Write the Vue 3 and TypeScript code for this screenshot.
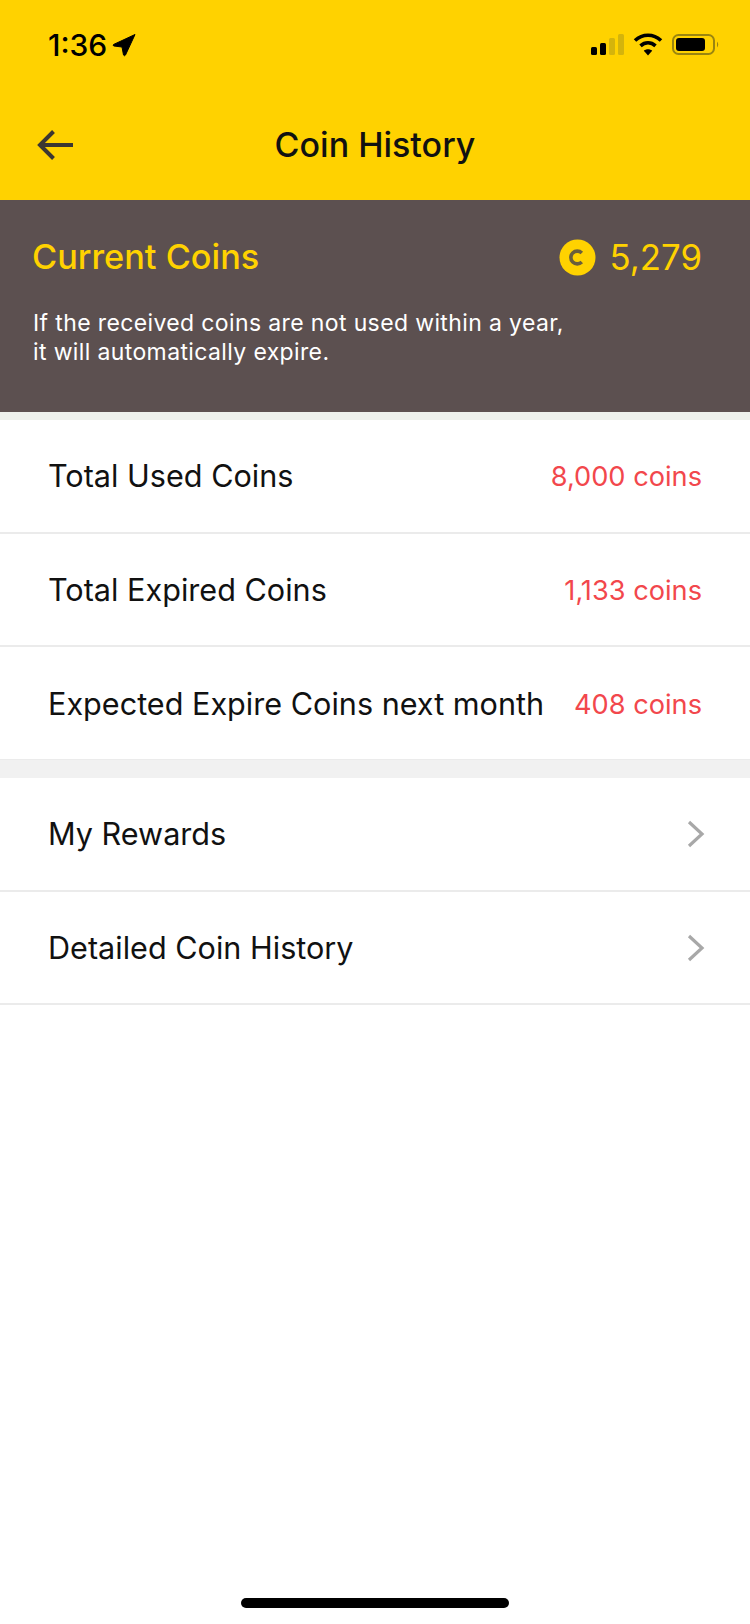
<script setup lang="ts">
interface StatRow {
  label: string
  value: string
}
const stats: StatRow[] = [
  { label: 'Total Used Coins', value: '8,000 coins' },
  { label: 'Total Expired Coins', value: '1,133 coins' },
  { label: 'Expected Expire Coins next month', value: '408 coins' }
]
const links: string[] = ['My Rewards', 'Detailed Coin History']
</script>

<template>
  <div class="page">
    <header class="top">
      <div class="status">
        <div class="status-left">
          <span class="time">1:36</span>
          <svg class="loc" width="24" height="24" viewBox="0 0 24 24">
            <path d="M23 1.5 L1.5 11.5 Q0.5 12.5 2 13 L10 14 L11.5 22 Q12.5 23.5 13.5 22 Z" fill="#000" stroke="#000" stroke-width="1" stroke-linejoin="round" />
          </svg>
        </div>
        <div class="status-right">
          <svg class="signal" width="36" height="24" viewBox="0 0 36 24">
            <rect x="1" y="14" width="6" height="8" rx="1.5" fill="#000" />
            <rect x="10" y="10" width="6" height="12" rx="1.5" fill="#000" />
            <rect x="19" y="5" width="6" height="17" rx="1.5" fill="#d4b40c" />
            <rect x="28" y="1" width="6" height="21" rx="1.5" fill="#d4b40c" />
          </svg>
          <svg width="30" height="24" viewBox="0 0 30 24">
            <path d="M2 7.5 C9.5 0.5 20.5 0.5 28 7.5" fill="none" stroke="#000" stroke-width="3.6" />
            <path d="M7.5 12.8 C12 8.8 18 8.8 22.5 12.8" fill="none" stroke="#000" stroke-width="3.6" />
            <path d="M15 22.5 L10.8 17.8 C13 15.8 17 15.8 19.2 17.8 Z" fill="#000" />
          </svg>
          <svg width="48" height="24" viewBox="0 0 48 24">
            <rect x="1" y="2" width="41" height="19" rx="5.5" fill="none" stroke="#9a8510" stroke-width="2" />
            <rect x="4" y="5" width="29" height="13" rx="3" fill="#000" />
            <path d="M45 8.5 Q47.5 11.5 45 14.5 Z" fill="#9a8510" />
          </svg>
        </div>
      </div>
      <div class="nav">
        <svg class="back" width="38" height="30" viewBox="0 0 38 30">
          <path d="M36 15 H3 M16.5 1.5 L3 15 L16.5 28.5" fill="none" stroke="#3c3732" stroke-width="4" />
        </svg>
        <h1 class="title">Coin History</h1>
      </div>
    </header>

    <section class="summary">
      <div class="summary-head">
        <span class="summary-label">Current Coins</span>
        <span class="balance">
          <svg width="37" height="37" viewBox="0 0 37 37">
            <circle cx="18.5" cy="18.5" r="18" fill="#ffd200" />
            <path d="M22.8 14 A6.4 6.4 0 1 0 22.8 23" fill="none" stroke="#6a5f3c" stroke-width="3.6" />
          </svg>
          <span class="balance-num">5,279</span>
        </span>
      </div>
      <p class="note">If the received coins are not used within a year,<br />it will automatically expire.</p>
    </section>

    <div class="strip"></div>

    <div v-for="row in stats" :key="row.label" class="row">
      <span class="row-label">{{ row.label }}</span>
      <span class="row-value">{{ row.value }}</span>
    </div>

    <div class="gap"></div>

    <div v-for="link in links" :key="link" class="row">
      <span class="row-label">{{ link }}</span>
      <svg class="chevron" width="20" height="28" viewBox="0 0 20 28">
        <path d="M3 2 L16 14 L3 26" fill="none" stroke="#a8a8a8" stroke-width="3.2" />
      </svg>
    </div>

    <div class="home-bar"></div>
  </div>
</template>

<style>
html,
body {
  margin: 0;
  background: #fff;
}
</style>

<style scoped>
.page {
  position: relative;
  width: 750px;
  height: 1624px;
  overflow: hidden;
  background: #fff;
  font-family: Inter, "Liberation Sans", sans-serif;
  color: #111;
}

.top {
  height: 200px;
  background: #ffd200;
  display: flex;
  flex-direction: column;
}

.status {
  height: 88px;
  padding: 30px 30px 0 48px;
  box-sizing: border-box;
  display: flex;
  justify-content: space-between;
  align-items: flex-start;
}

.status-left {
  display: flex;
  align-items: center;
  gap: 5px;
}

.time {
  font-size: 30px;
  line-height: 30px;
  font-weight: 500;
  color: #000;
}

.status-right {
  display: flex;
  align-items: center;
  gap: 9px;
  padding-top: 3px;
}

.signal {
  margin-right: -2px;
}

.nav {
  position: relative;
  flex: 1;
  display: flex;
  align-items: center;
  justify-content: center;
}

.back {
  position: absolute;
  left: 37px;
  top: 42px;
}

.title {
  margin: 0;
  font-size: 34px;
  font-weight: 500;
  color: #111;
}

.summary {
  height: 212px;
  box-sizing: border-box;
  background: #5c5050;
  padding: 36px 48px 0 32px;
}

.summary-head {
  display: flex;
  justify-content: space-between;
  align-items: center;
  height: 40px;
}

.summary-label {
  font-size: 34.3px;
  font-weight: 500;
  color: #ffd200;
}

.balance {
  display: flex;
  align-items: center;
  gap: 14px;
  padding-top: 2px;
}

.balance-num {
  font-size: 34.8px;
  font-weight: 400;
  color: #ffd200;
}

.note {
  margin: 33px 0 0;
  padding-left: 1px;
  font-size: 23px;
  line-height: 29px;
  color: #fff;
  letter-spacing: 0.37px;
}

.strip {
  height: 8px;
  background: #edf0ec;
}

.row {
  height: 113.67px;
  box-sizing: border-box;
  padding: 0 48px;
  border-bottom: 2px solid #ebebeb;
  display: flex;
  justify-content: space-between;
  align-items: center;
}

.row-label {
  font-size: 30.6px;
  color: #111;
}

.row-value {
  font-size: 27.2px;
  color: #f2474c;
  padding-top: 2px;
}

.chevron {
  margin-right: -4px;
  margin-top: 1px;
}

.gap {
  height: 18px;
  margin-top: -1px;
  background: #f1f1f1;
}

.home-bar {
  position: absolute;
  left: 241px;
  bottom: 16px;
  width: 268px;
  height: 10px;
  border-radius: 5px;
  background: #000;
}
</style>
